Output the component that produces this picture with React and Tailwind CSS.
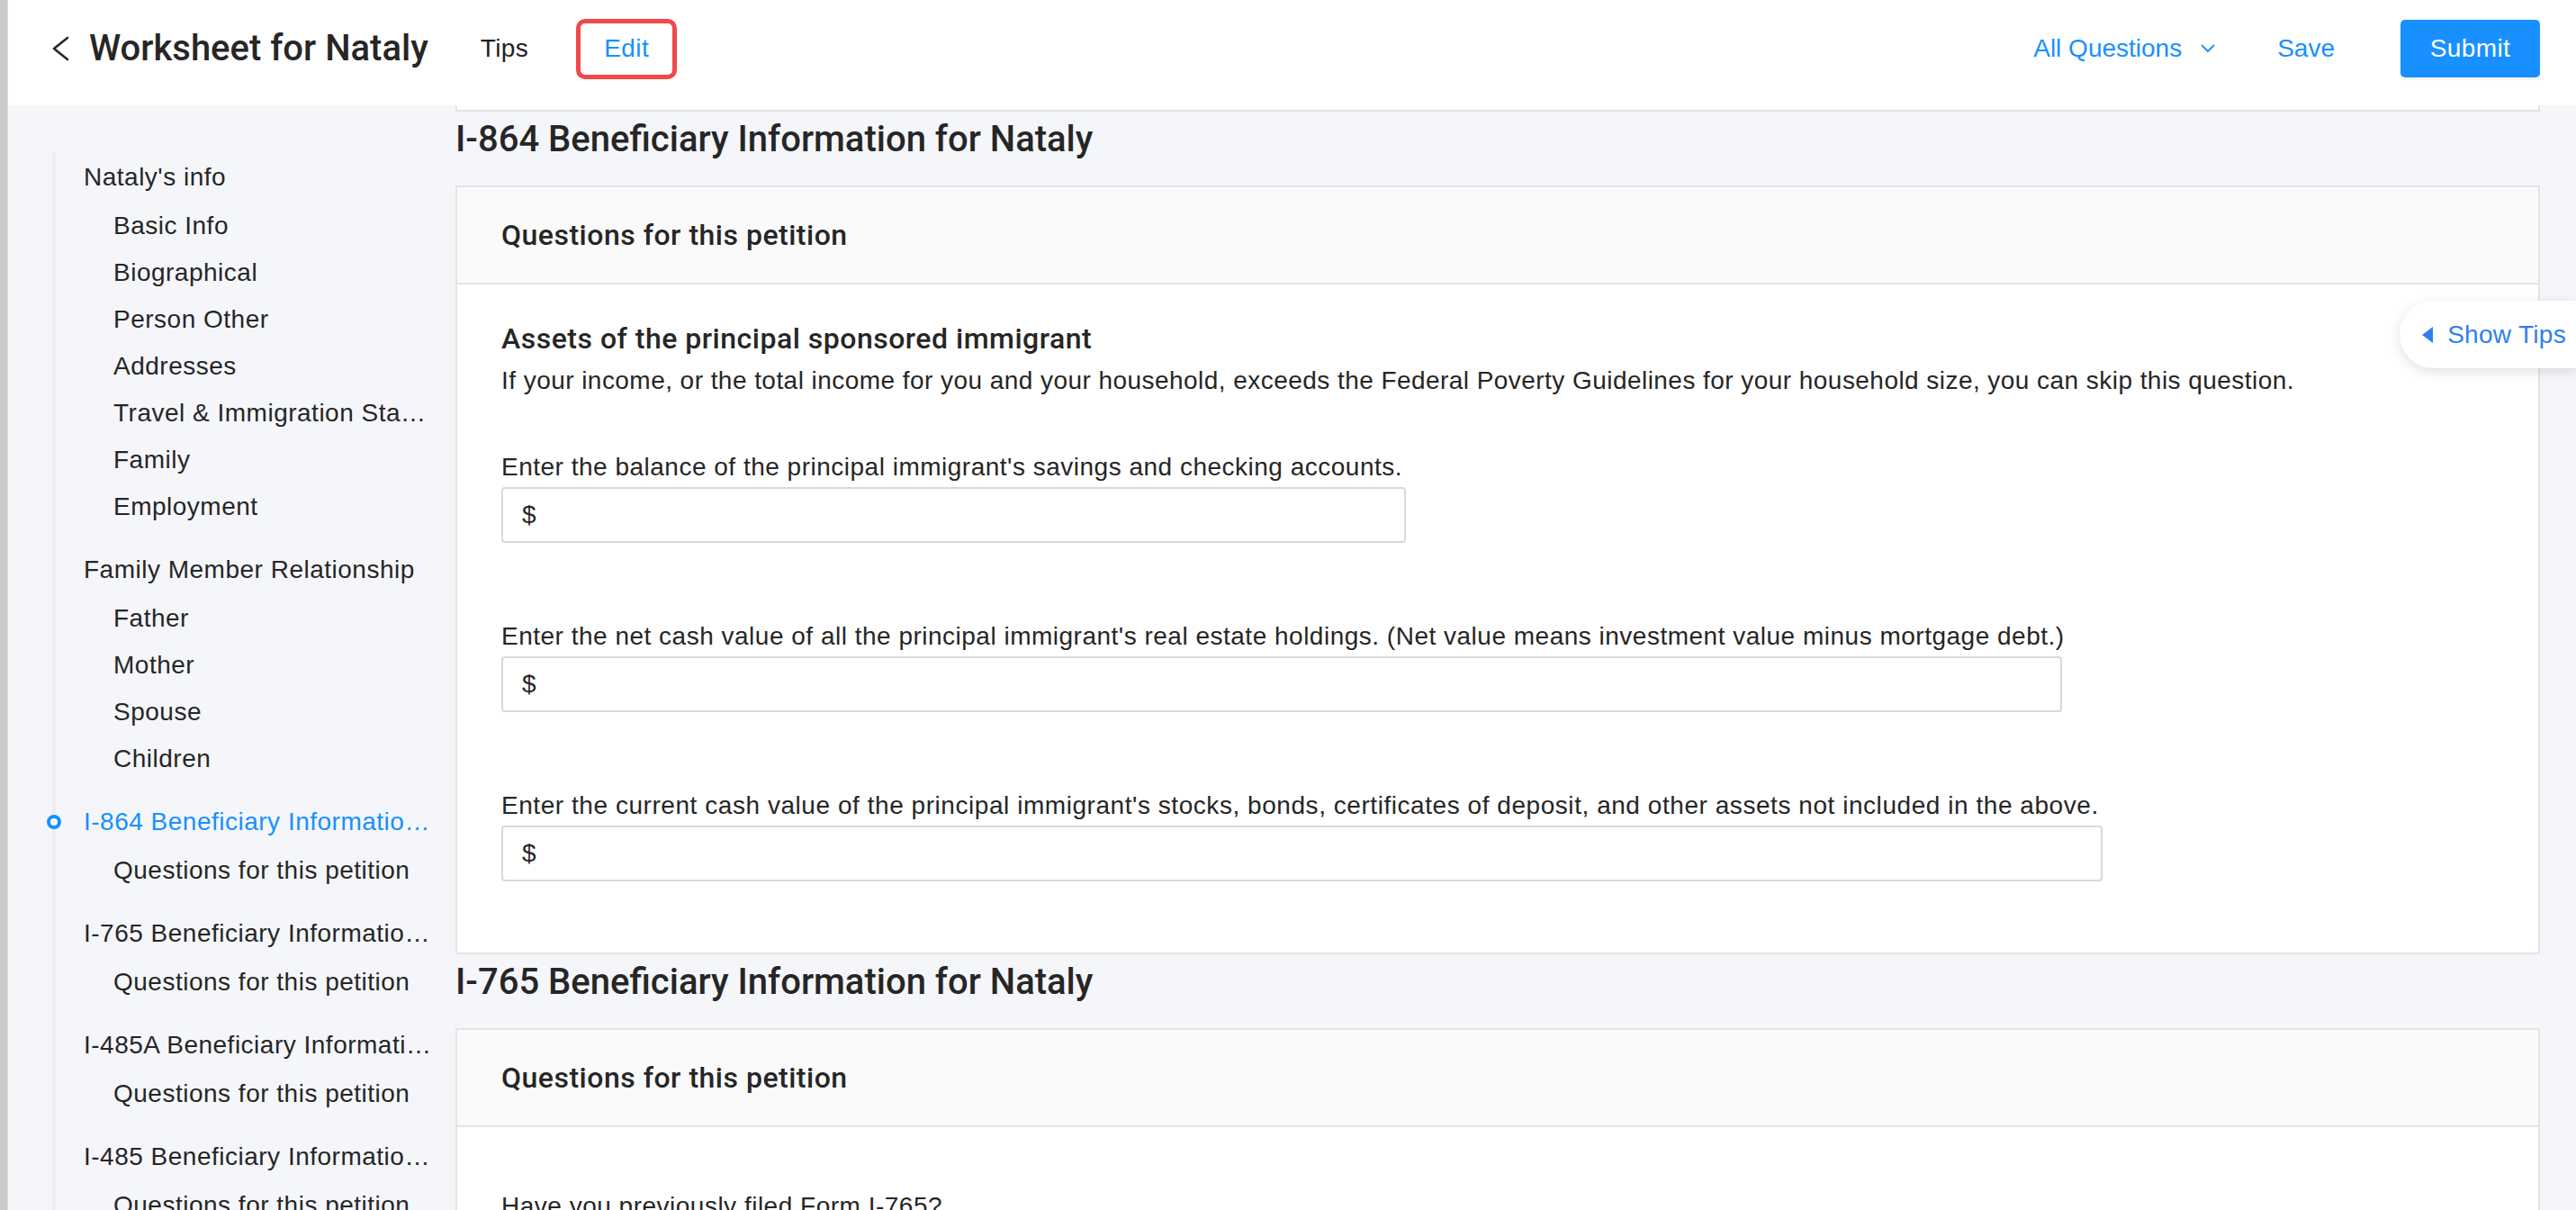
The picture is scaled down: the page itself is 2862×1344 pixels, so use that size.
import React from "react";

const groups = [
  {
    title: "Nataly's info",
    items: ["Basic Info", "Biographical", "Person Other", "Addresses", "Travel & Immigration Status", "Family", "Employment"],
  },
  { title: "Family Member Relationship", items: ["Father", "Mother", "Spouse", "Children"] },
  { title: "I-864 Beneficiary Information for Nataly", active: true, items: ["Questions for this petition"] },
  { title: "I-765 Beneficiary Information for Nataly", items: ["Questions for this petition"] },
  { title: "I-485A Beneficiary Information for Nataly", items: ["Questions for this petition"] },
  { title: "I-485 Beneficiary Information for Nataly", items: ["Questions for this petition"] },
];

function Sidebar() {
  return (
    <div className="relative w-[497px] shrink-0 pt-[52px] tracking-[0.5px]">
      <div className="absolute left-[49px] top-[51px] bottom-0 w-[4px] bg-[#eceef2]" />
      {groups.map((g) => (
        <div key={g.title} className="mb-[16px]">
          <div
            className={
              "relative h-[56px] leading-[56px] pl-[84px] pr-[27px] truncate text-[28px] " +
              (g.active ? "text-[#1890ff]" : "text-[#262626]")
            }
          >
            {g.active && (
              <span className="absolute left-[43px] top-[20px] w-[16px] h-[16px] rounded-full border-[4px] border-[#1890ff] bg-white" />
            )}
            {g.title}
          </div>
          {g.items.map((it) => (
            <div key={it} className="h-[52px] leading-[52px] pl-[117px] pr-[27px] truncate text-[28px] text-[#262626]">
              {it}
            </div>
          ))}
        </div>
      ))}
    </div>
  );
}

function MoneyInput({ w }) {
  return (
    <div className={"h-[62px] border-2 border-[#d9d9d9] rounded-[4px] bg-white flex items-center pl-[21px] text-[28px] text-[#262626] " + w}>
      $
    </div>
  );
}

function Card({ children, bodyClass }) {
  return (
    <div className="bg-white border-2 border-[#e4e4e4]">
      <div className="h-[108px] bg-[#fafafa] border-b-2 border-[#e4e4e4] flex items-center px-[49px]">
        <span className="font-['Roboto',sans-serif] font-medium text-[32px] tracking-[0.5px] text-[#262626]">Questions for this petition</span>
      </div>
      <div className={"px-[49px] tracking-[0.5px] " + bodyClass}>{children}</div>
    </div>
  );
}

function Heading({ children }) {
  return (
    <div className="pt-[3px] pb-[23px] leading-[56px] font-['Roboto',sans-serif] font-medium text-[40px] text-[#262626]">
      {children}
    </div>
  );
}

export default function App() {
  return (
    <div className="w-[2862px] h-[1344px] overflow-hidden flex bg-[#f5f6fa] font-['Liberation_Sans',Arial,sans-serif] text-[#262626]">
      <div className="w-[9px] shrink-0 bg-[#c9c9c9] border-r border-[#dedede]" />
      <div className="flex-1 flex flex-col relative min-w-0">
        {/* Header */}
        <div className="h-[117px] shrink-0 bg-white flex items-center pr-[40px] pb-[9px] relative z-10">
          <svg width="22" height="28" viewBox="0 0 22 28" className="ml-[47px]" fill="none">
            <polyline points="19,2 4,14 19,26" stroke="#262626" strokeWidth="2.6" strokeLinecap="round" strokeLinejoin="round" />
          </svg>
          <div className="ml-[21px] font-['Roboto',sans-serif] font-medium text-[40px] text-[#262626]">
            Worksheet for Nataly
          </div>
          <div className="ml-[58px] text-[28px] tracking-[0.4px] text-[#1f1f1f]">Tips</div>
          <div className="ml-[53px] w-[112px] h-[67px] border-[5px] border-[#f1484a] rounded-[10px] flex items-center justify-center text-[28px] tracking-[0.4px] text-[#1890ff]">
            Edit
          </div>
          <div className="flex-1" />
          <div className="flex items-center text-[28px] text-[#1890ff]">
            <span>All Questions</span>
            <svg width="16" height="10" viewBox="0 0 16 10" className="ml-[21px]" fill="none">
              <polyline points="1.5,1.5 8,8 14.5,1.5" stroke="#1890ff" strokeWidth="1.8" strokeLinecap="round" strokeLinejoin="round" />
            </svg>
          </div>
          <div className="ml-[69px] text-[28px] text-[#1890ff]">Save</div>
          <div className="ml-[73px] w-[155px] h-[64px] rounded-[5px] bg-[#1890ff] shadow-[0_3px_0_rgba(0,0,0,0.04)] flex items-center justify-center text-[28px] tracking-[0.4px] text-white">
            Submit
          </div>
        </div>

        {/* Body */}
        <div className="flex flex-1 min-h-0">
          <Sidebar />
          <div className="flex-1 min-w-0 pr-[40px]">
            <div className="h-[7px] bg-white border-x-2 border-b-2 border-[#e4e4e4]" />
            <Heading>I-864 Beneficiary Information for Nataly</Heading>
            <Card bodyClass="pt-[38px] pb-[79px]">
              <div className="leading-[44px] font-['Roboto',sans-serif] font-medium text-[32px] text-[#262626]">
                Assets of the principal sponsored immigrant
              </div>
              <div className="mt-[3px] leading-[44px] text-[28px] tracking-[0.45px] text-[#262626]">
                If your income, or the total income for you and your household, exceeds the Federal Poverty Guidelines for your household size, you can skip this question.
              </div>
              <div className="mt-[52px] leading-[44px] text-[28px]">
                Enter the balance of the principal immigrant's savings and checking accounts.
              </div>
              <MoneyInput w="w-[1005px]" />
              <div className="mt-[82px] leading-[44px] text-[28px]">
                Enter the net cash value of all the principal immigrant's real estate holdings. (Net value means investment value minus mortgage debt.)
              </div>
              <MoneyInput w="w-[1734px]" />
              <div className="mt-[82px] leading-[44px] text-[28px] tracking-[0.55px]">
                Enter the current cash value of the principal immigrant's stocks, bonds, certificates of deposit, and other assets not included in the above.
              </div>
              <MoneyInput w="w-[1779px]" />
            </Card>
            <Heading>I-765 Beneficiary Information for Nataly</Heading>
            <Card bodyClass="pt-[66px] pb-[60px]">
              <div className="leading-[44px] text-[28px]">Have you previously filed Form I-765?</div>
            </Card>
          </div>
        </div>

        {/* Show Tips tab */}
        <div className="absolute right-0 top-[334px] h-[75px] pl-[25px] pr-[11px] bg-white rounded-l-full shadow-[0_4px_14px_rgba(0,0,0,0.12)] flex items-center text-[28px] tracking-[0.3px] text-[#2f80ed] z-20">
          <svg width="12" height="18" viewBox="0 0 12 18" className="mr-[16px]">
            <polygon points="12,0 0,9 12,18" fill="#2f80ed" />
          </svg>
          Show Tips
        </div>
      </div>
    </div>
  );
}
